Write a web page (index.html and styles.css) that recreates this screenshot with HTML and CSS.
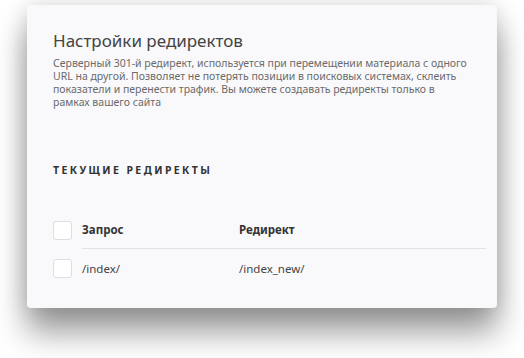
FILE: index.html
```html
<!DOCTYPE html>
<html>
<head>
  <meta charset="UTF-8">
  <title>Настройки редиректов</title>
  <link rel="stylesheet" href="styles.css">
</head>
<body>
  <div class="card">
    <h1>Настройки редиректов</h1>
    <p class="desc">Серверный 301-й редирект, используется при перемещении материала с одного URL на другой. Позволяет не потерять позиции в поисковых системах, склеить показатели и перенести трафик. Вы можете создавать редиректы только в рамках вашего сайта</p>

    <h2>Текущие редиректы</h2>

    <div class="table">
      <div class="row head">
        <span class="check"></span>
        <span class="cell from">Запрос</span>
        <span class="cell to">Редирект</span>
      </div>
      <div class="row">
        <span class="check"></span>
        <span class="cell from">/index/</span>
        <span class="cell to">/index_new/</span>
      </div>
    </div>
  </div>
</body>
</html>
```

FILE: styles.css
```css
body {
  margin: 0;
  padding: 5px 0 50px 27px;
  background: #fff;
  font-family: "Noto Sans", sans-serif;
  color: #444;
}

.card {
  width: 470px;
  height: 303px;
  box-sizing: border-box;
  padding: 24px 11px 0 26px;
  background: #f9f9fb;
  border-radius: 4px;
  box-shadow: 0 24px 32px rgba(0, 0, 0, 0.4), 0 0 22px rgba(0, 0, 0, 0.14);
}

h1 {
  margin: 0;
  font-size: 17px;
  font-weight: 400;
  line-height: 24px;
  color: #444;
}

.desc {
  margin: 4px 0 0;
  width: 416px;
  font-size: 10.5px;
  line-height: 13px;
  color: #6a6a6a;
}

h2 {
  margin: 54px 0 0;
  font-size: 10.5px;
  line-height: 14px;
  font-weight: 700;
  letter-spacing: 2.4px;
  text-transform: uppercase;
  color: #333;
}

.table {
  margin-top: 34px;
}

.row {
  display: flex;
  align-items: center;
  height: 38px;
}

.row.head {
  font-weight: 700;
  color: #333;
}

.row.head .cell {
  border-bottom: 1px solid #e2e2e6;
}

.check {
  flex: none;
  width: 17px;
  height: 17px;
  margin-right: 10px;
  background: #fff;
  border: 1px solid #dedee2;
  border-radius: 3px;
}

.cell {
  display: flex;
  align-items: center;
  height: 38px;
  box-sizing: border-box;
  font-size: 11.5px;
}

.from {
  width: 157px;
}

.to {
  flex: 1;
}
```
